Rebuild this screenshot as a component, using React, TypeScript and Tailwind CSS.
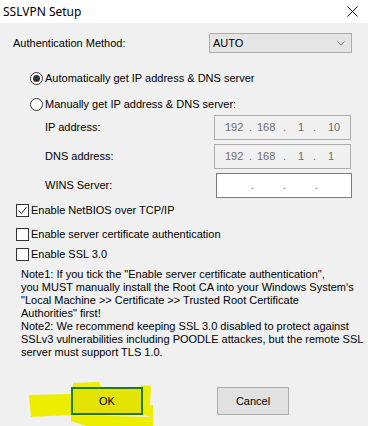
export default function App() {
  const font = { fontFamily: '"Liberation Sans", Arial, sans-serif' };
  return (
    <div className="relative w-[368px] h-[426px] overflow-hidden bg-[#f0f0f0] text-[11px] leading-[13px] text-black" style={font}>
      {/* タイトルバー */}
      <div className="h-[23px] bg-white flex items-center justify-between pl-[3px] pr-[10px]">
        <span className="text-[12px] text-black" style={{ fontFamily: '"Noto Sans", sans-serif' }}>SSLVPN Setup</span>
        <svg width="11" height="11" viewBox="0 0 11 11">
          <path d="M0.5 0.5 L10.5 10.5 M10.5 0.5 L0.5 10.5" stroke="#111" strokeWidth="1" />
        </svg>
      </div>

      <div className="pl-[13px] pr-[16px] pt-[10px]">
        {/* 認証方式 */}
        <div className="flex items-center justify-between h-[20px]">
          <span>Authentication Method:</span>
          <div className="w-[143px] h-[20px] bg-[#e5e5e5] border border-[#adadad] flex items-center justify-between pl-[3px] pr-[6px]">
            <span>AUTO</span>
            <svg width="8" height="5" viewBox="0 0 8 5">
              <path d="M0.5 0.5 L4 4 L7.5 0.5" fill="none" stroke="#7a7a7a" strokeWidth="1" />
            </svg>
          </div>
        </div>

        {/* ラジオボタン */}
        <div className="ml-[17px] mt-[19px] flex flex-col gap-[13px]">
          <label className="flex items-center gap-[2px] h-[13px]">
            <span className="w-[13px] h-[13px] rounded-full border border-[#333] flex items-center justify-center bg-white">
              <span className="w-[7px] h-[7px] rounded-full bg-[#333]" />
            </span>
            <span>Automatically get IP address &amp; DNS server</span>
          </label>
          <label className="flex items-center gap-[2px] h-[13px]">
            <span className="w-[13px] h-[13px] rounded-full border border-[#333] bg-white" />
            <span>Manually get IP address &amp; DNS server:</span>
          </label>
        </div>

        {/* IPアドレス入力 */}
        <div className="mt-[4px] flex flex-col gap-[4px]">
          <IpRow label="IP address:" parts={["192", "168", "1", "10"]} />
          <IpRow label="DNS address:" parts={["192", "168", "1", "1"]} />
          <div className="flex items-center justify-between pl-[32px]">
            <span>WINS Server:</span>
            <div className="w-[136px] h-[25px] bg-white border border-[#7a7a7a] flex items-center text-[#6d6d6d]">
              <span className="w-[34px]" />
              <span className="w-[32px]">.</span>
              <span className="w-[32px]">.</span>
              <span>.</span>
            </div>
          </div>
        </div>

        {/* チェックボックス */}
        <div className="ml-[3px] mt-[6px] flex flex-col">
          <Check label="Enable NetBIOS over TCP/IP" checked />
          <div className="mt-[11px]">
            <Check label="Enable server certificate authentication" />
          </div>
          <div className="mt-[7px]">
            <Check label="Enable SSL 3.0" />
          </div>
        </div>

        {/* 注意書き */}
        <div className="ml-[8px] mt-[7px] whitespace-nowrap">
          <div>Note1: If you tick the "Enable server certificate authentication",</div>
          <div>you MUST manually install the Root CA into your Windows System's</div>
          <div>"Local Machine &gt;&gt; Certificate &gt;&gt; Trusted Root Certificate</div>
          <div>Authorities" first!</div>
          <div>Note2: We recommend keeping SSL 3.0 disabled to protect against</div>
          <div>SSLv3 vulnerabilities including POODLE attackes, but the remote SSL</div>
          <div>server must support TLS 1.0.</div>
        </div>

        {/* ボタン */}
        <div className="mt-[28px] flex gap-[74px] pl-[58px]">
          <div className="relative">
            <svg className="absolute left-[-42px] top-[-6px]" width="126" height="46" viewBox="0 0 126 46">
              <path d="M0 14 L42 13 L42 34 L2 36 Z" fill="#eded00" />
              <path d="M44 2 L70 1 L72 6 L44 6 Z" fill="#eded00" />
              <path d="M112 4 L122 5 L121 26 L112 26 Z" fill="#eded00" />
              <path d="M112 26 L124 24 L124 36 L112 34 Z" fill="#eded00" />
              <path d="M42 34 L124 36 L124 46 L60 46 L42 40 Z" fill="#eded00" />
            </svg>
            <div className="relative w-[72px] h-[28px] bg-[#e3e300] border-2 border-[#1f7a1f] flex items-center justify-center">
              OK
            </div>
          </div>
          <div className="w-[72px] h-[28px] bg-[#e1e1e1] border border-[#adadad] flex items-center justify-center">
            Cancel
          </div>
        </div>
      </div>
    </div>
  );
}

function IpRow({ label, parts }: { label: string; parts: string[] }) {
  return (
    <div className="flex items-center justify-between pl-[32px]">
      <span>{label}</span>
      <div className="w-[137px] h-[25px] bg-[#f0f0f0] border border-[#adadad] flex items-center text-[#6d6d6d] mr-[1px]">
        <span className="w-[10px]" />
        <span className="w-[24px]">{parts[0]}</span>
        <span className="w-[8px]">.</span>
        <span className="w-[26px]">{parts[1]}</span>
        <span className="w-[15px]">.</span>
        <span className="w-[15px]">{parts[2]}</span>
        <span className="w-[15px]">.</span>
        <span>{parts[3]}</span>
      </div>
    </div>
  );
}

function Check({ label, checked }: { label: string; checked?: boolean }) {
  return (
    <label className="flex items-center gap-[2px] h-[13px]">
      <span className="w-[13px] h-[13px] border border-[#333] bg-white flex items-center justify-center">
        {checked && (
          <svg width="11" height="11" viewBox="0 0 11 11">
            <path d="M1.5 5.5 L4.5 8.5 L9.5 2" fill="none" stroke="#222" strokeWidth="1" />
          </svg>
        )}
      </span>
      <span>{label}</span>
    </label>
  );
}
